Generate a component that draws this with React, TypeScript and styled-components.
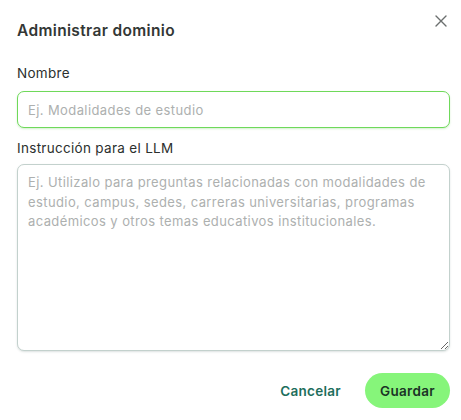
import styled, { createGlobalStyle } from "styled-components";

const GlobalStyle = createGlobalStyle`
  html, body {
    margin: 0;
    padding: 0;
    background: #ffffff;
  }
  body {
    font-family: Inter, "Open Sans", sans-serif;
  }
`;

const App = () => {
  return (
    <>
      <GlobalStyle />
      <Dialog>
        <Header>
          <Title>Administrar dominio</Title>
          <CloseButton aria-label="Cerrar">
            <svg width="12" height="12" viewBox="0 0 12 12">
              <path
                d="M1 1 L11 11 M11 1 L1 11"
                stroke="#6b6f6e"
                strokeWidth="1.4"
                strokeLinecap="round"
              />
            </svg>
          </CloseButton>
        </Header>
        <Field>
          <Label>Nombre</Label>
          <Input placeholder="Ej. Modalidades de estudio" />
        </Field>
        <Field>
          <Label $tight>Instrucción para el LLM</Label>
          <TextArea placeholder="Ej. Utilizalo para preguntas relacionadas con modalidades de estudio, campus, sedes, carreras universitarias, programas académicos y otros temas educativos institucionales." />
        </Field>
        <Footer>
          <GhostButton>Cancelar</GhostButton>
          <PrimaryButton>Guardar</PrimaryButton>
        </Footer>
      </Dialog>
    </>
  );
};

const Dialog = styled.div`
  width: 461px;
  height: 420px;
  box-sizing: border-box;
  padding: 18px 11px 0 17px;
  display: flex;
  flex-direction: column;
`;

const Header = styled.div`
  position: relative;
  height: 24px;
  display: flex;
  align-items: center;
  margin-bottom: 21px;
`;

const Title = styled.h2`
  margin: 0;
  font-size: 15.5px;
  font-weight: 600;
  color: #333735;
  letter-spacing: 0.35px;
`;

const CloseButton = styled.button`
  position: absolute;
  top: -4px;
  right: 2px;
  width: 14px;
  height: 14px;
  padding: 0;
  border: none;
  background: none;
  display: flex;
  align-items: center;
  justify-content: center;
  cursor: pointer;
`;

const Field = styled.div`
  display: flex;
  flex-direction: column;
  margin-bottom: 10px;
`;

const Label = styled.label<{ $tight?: boolean }>`
  font-size: 13.5px;
  line-height: 20px;
  font-weight: 400;
  color: #2c302e;
  letter-spacing: 0.3px;
  margin-bottom: ${(p) => (p.$tight ? "6px" : "8px")};
`;

const Input = styled.input`
  height: 37px;
  box-sizing: border-box;
  border: 1.5px solid #6fd95a;
  border-radius: 7px;
  padding: 0 10px;
  font-family: inherit;
  font-size: 13px;
  letter-spacing: 0.4px;
  color: #333;
  outline: none;
  box-shadow: 0 1px 2px rgba(80, 200, 60, 0.25);

  &::placeholder {
    color: #adb0af;
  }
`;

const TextArea = styled.textarea`
  height: 187px;
  box-sizing: border-box;
  border: 1.5px solid #c3d1cd;
  border-radius: 7px;
  padding: 8px 10px;
  font-family: inherit;
  font-size: 13px;
  letter-spacing: 0.4px;
  line-height: 19.5px;
  color: #333;
  outline: none;
  resize: vertical;
  box-shadow: 0 1px 2px rgba(120, 140, 135, 0.25);

  &::placeholder {
    color: #adb0af;
  }
`;

const Footer = styled.div`
  display: flex;
  justify-content: flex-end;
  align-items: center;
  gap: 24px;
  margin-top: 12px;
`;

const GhostButton = styled.button`
  border: none;
  background: none;
  padding: 0;
  font-family: inherit;
  font-size: 13.5px;
  font-weight: 600;
  letter-spacing: 0.3px;
  color: #1d6e5c;
  cursor: pointer;
`;

const PrimaryButton = styled.button`
  width: 85px;
  height: 35px;
  border: none;
  border-radius: 18px;
  background: #86f57a;
  font-family: inherit;
  font-size: 13.5px;
  font-weight: 600;
  letter-spacing: 0.3px;
  color: #1b3326;
  cursor: pointer;
`;

export default App;
